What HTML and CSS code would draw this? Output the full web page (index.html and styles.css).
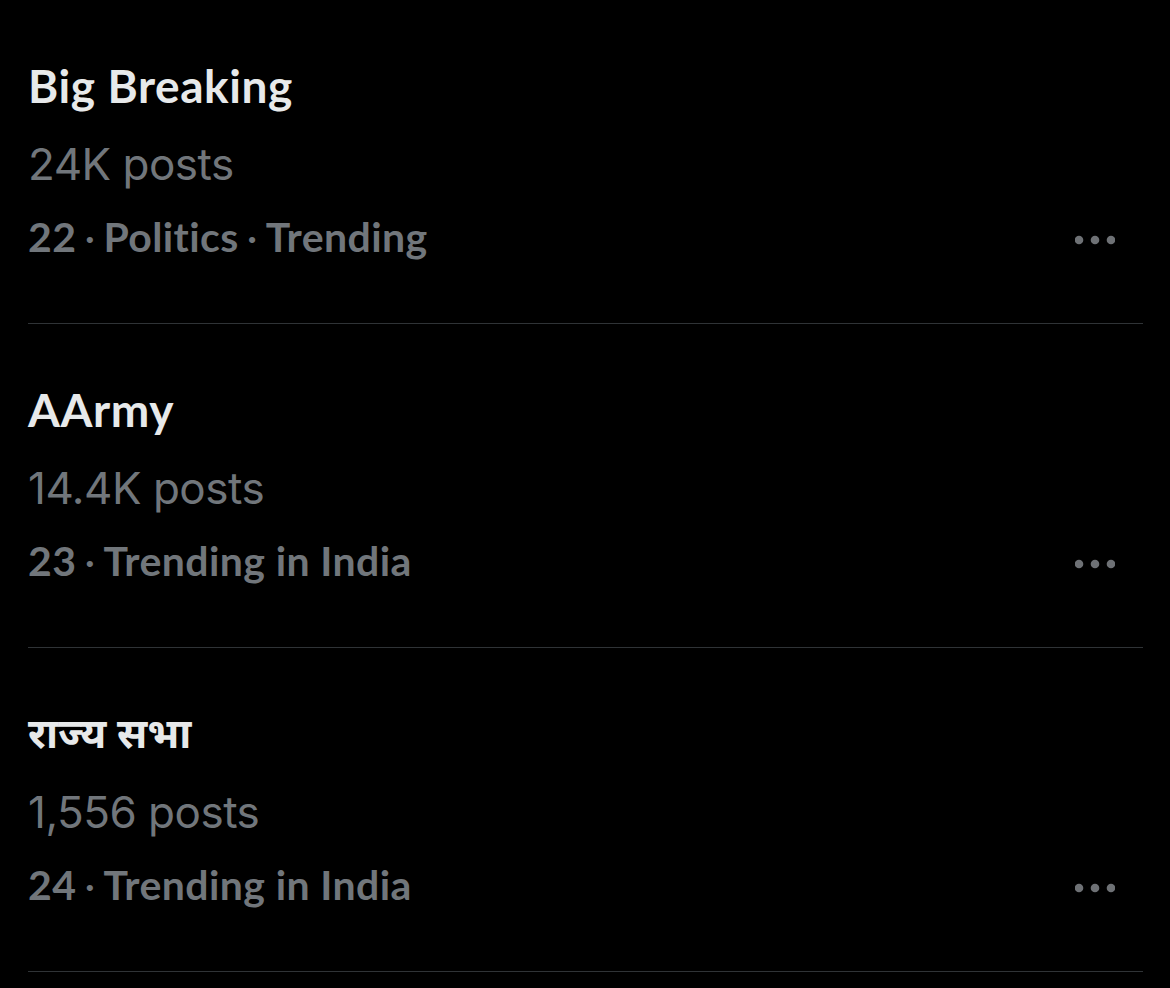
FILE: index.html
```html
<!DOCTYPE html>
<html>
<head>
    <title>Trending</title>
    <meta charset="utf-8">
    <link rel="stylesheet" href="styles.css">
</head>
<body>

    <ul class="trend-list">
        <li class="trend">
            <div class="trend-title">Big Breaking</div>
            <div class="trend-posts">24K posts</div>
            <div class="trend-meta">
                <span class="meta-text">22<span class="dot">·</span>Politics<span class="dot">·</span>Trending</span>
                <button class="more" aria-label="More">
                    <svg viewBox="0 0 40 10" width="40" height="10"><circle cx="4" cy="5" r="4.3"/><circle cx="20" cy="5" r="4.3"/><circle cx="36" cy="5" r="4.3"/></svg>
                </button>
            </div>
        </li>

        <li class="trend">
            <div class="trend-title">AArmy</div>
            <div class="trend-posts">14.4K posts</div>
            <div class="trend-meta">
                <span class="meta-text">23<span class="dot">·</span>Trending in India</span>
                <button class="more" aria-label="More">
                    <svg viewBox="0 0 40 10" width="40" height="10"><circle cx="4" cy="5" r="4.3"/><circle cx="20" cy="5" r="4.3"/><circle cx="36" cy="5" r="4.3"/></svg>
                </button>
            </div>
        </li>

        <li class="trend">
            <div class="trend-title hindi">राज्य सभा</div>
            <div class="trend-posts">1,556 posts</div>
            <div class="trend-meta">
                <span class="meta-text">24<span class="dot">·</span>Trending in India</span>
                <button class="more" aria-label="More">
                    <svg viewBox="0 0 40 10" width="40" height="10"><circle cx="4" cy="5" r="4.3"/><circle cx="20" cy="5" r="4.3"/><circle cx="36" cy="5" r="4.3"/></svg>
                </button>
            </div>
        </li>
    </ul>

</body>
</html>
```

FILE: styles.css
```css
/* Base */
body {
    margin: 0;
    padding: 0;
    background-color: #000;
    color: #e7e9ea;
    font-family: Lato, 'Noto Sans', sans-serif;
    font-variant-ligatures: none;
}

/* Trend list */
.trend-list {
    list-style: none;
    margin: 0 27px 0 28px;
    padding: 0;
}

.trend {
    box-sizing: border-box;
    height: 324px;
    padding-top: 60px;
    border-bottom: 1px solid #2f3336;
}

.trend-title {
    font-size: 46px;
    font-weight: 700;
    line-height: 52px;
    letter-spacing: 0.6px;
    color: #e7e9ea;
}

.trend-title.hindi {
    font-family: 'Noto Sans Devanagari', 'Lohit Devanagari', 'Noto Sans', sans-serif;
    font-size: 41px;
    letter-spacing: 0;
    margin: 4px 0 -4px;
}

.trend-posts {
    margin-top: 26px;
    font-family: Inter, 'Noto Sans', sans-serif;
    font-size: 44px;
    font-weight: 400;
    line-height: 52px;
    color: #71767b;
    letter-spacing: -0.5px;
}

.trend-meta {
    margin-top: 24px;
    display: flex;
    align-items: center;
    justify-content: space-between;
}

.meta-text {
    font-size: 41px;
    font-weight: 700;
    line-height: 46px;
    letter-spacing: 0.4px;
    color: #71767b;
}

.dot {
    margin: 0 8px;
    font-weight: 400;
}

/* More button */
.more {
    background: none;
    border: 0;
    padding: 0;
    margin: 6px 28px 0 0;
    display: flex;
}

.more svg {
    fill: #6e7175;
}
```
